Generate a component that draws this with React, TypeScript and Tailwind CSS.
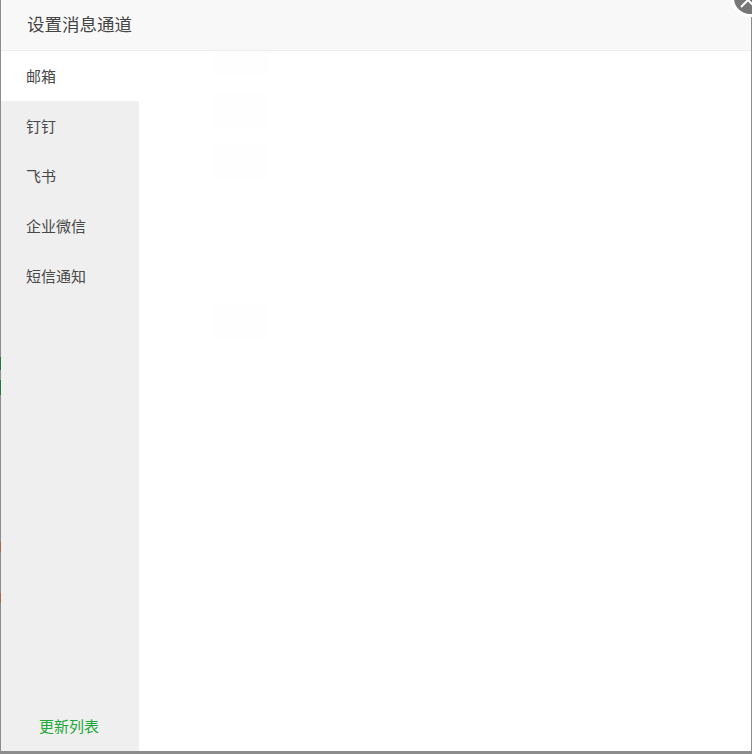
const items = ["钉钉", "飞书", "企业微信", "短信通知"];
const edge: string[] = [
  "h-[357px] bg-transparent",
  "h-[13px] bg-[#1a7a3a]",
  "h-[10px] bg-transparent",
  "h-[15px] bg-[#1a7a3a]",
  "h-[147px] bg-transparent",
  "h-[10px] bg-[#a8694a]",
  "h-[41px] bg-transparent",
  "h-[10px] bg-[#a8694a]",
];

export default function App() {
  const font = { fontFamily: '"Microsoft YaHei", "Noto Sans CJK SC", sans-serif' };
  return (
    <div className="relative w-[752px] h-[754px] overflow-hidden flex bg-[#8c8c8c] pr-px pb-[3px]" style={font}>
      <div className="w-px shrink-0 flex flex-col">
        {edge.map((c, i) => (
          <div key={i} className={c} />
        ))}
      </div>
      <div className="flex-1 min-w-0 flex flex-col bg-white">
        <div className="h-[51px] shrink-0 bg-[#f8f8f8] border-b border-[#eeeeee] pl-[26px] pb-[2px] flex items-center text-[17.5px] text-[#444444]">
          设置消息通道
        </div>
        <div className="flex-1 flex min-h-0">
          <div className="w-[138px] shrink-0 flex flex-col bg-[#efefef] text-[15px] text-[#484848]">
            <div className="h-[50px] bg-white pl-[25px] flex items-center">邮箱</div>
            {items.map((t) => (
              <div key={t} className="h-[50px] pl-[25px] flex items-center">{t}</div>
            ))}
            <div className="mt-auto h-[50px] pr-[2px] flex items-center justify-center text-[#1fa83a]">更新列表</div>
          </div>
          <div className="flex-1 bg-white pl-[74px] flex flex-col items-start">
            <div className="w-[56px] h-[24px] bg-[#fefefe]" />
            <div className="w-[54px] h-[36px] mt-[17px] bg-[#fefefe]" />
            <div className="w-[54px] h-[36px] mt-[17px] bg-[#fefefe]" />
            <div className="w-[54px] h-[36px] mt-[124px] bg-[#fefefe]" />
          </div>
        </div>
      </div>
      <div className="absolute left-[731px] top-[-21px] w-[38px] h-[38px] rounded-full bg-[#777777] border-[3px] border-white flex items-center justify-center">
        <svg width="20" height="20" viewBox="0 0 20 20" stroke="#ffffff" strokeWidth="2" className="mt-[4px] ml-[-4px]">
          <path d="M3 3l14 14M17 3L3 17" />
        </svg>
      </div>
    </div>
  );
}
